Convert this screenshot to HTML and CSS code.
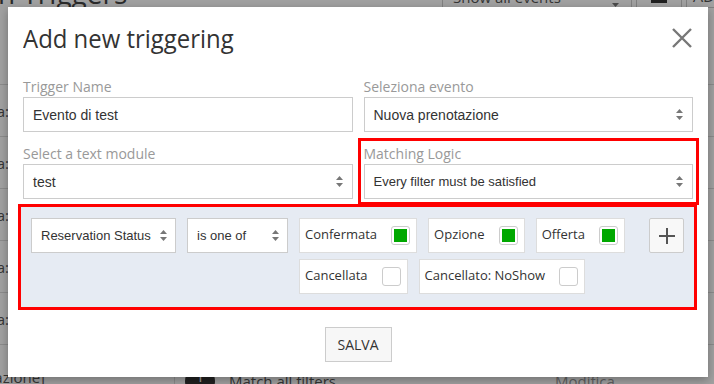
FILE: index.html
```html
<html lang="it">
<head>
<meta charset="UTF-8">
<meta name="viewport" content="width=device-width, initial-scale=1.0">
<title>Add new triggering</title>
<link rel="stylesheet" href="styles.css">
</head>
<body>
<div class="page">
  <div class="page-head">
    <h1 class="page-title">n Triggers</h1>
    <div class="page-tools">
      <div class="tool-select">Show all events
        <svg class="arrows" width="7" height="11" viewBox="0 0 7 11"><polygon points="0,4 3.5,0 7,4"/><polygon points="0,7 3.5,11 7,7"/></svg>
      </div>
      <div class="tool-btn"><span class="tool-icon"></span></div>
      <div class="tool-btn add">ADD</div>
    </div>
  </div>
  <div class="rows">
    <div class="row"><div class="row-key"><span>Data:</span></div></div>
    <div class="row"><div class="row-key"><span>Data:</span></div></div>
    <div class="row"><div class="row-key"><span>Data:</span></div></div>
    <div class="row"><div class="row-key"><span>Data:</span></div></div>
    <div class="row"><div class="row-key"><span>Data:</span></div></div>
    <div class="row last"><div class="row-key"><span>[Nuova prenotazione]</span></div>
      <div class="row-cell"><span class="badge">1</span>Match all filters</div>
      <div class="row-cell light">Modifica</div>
    </div>
  </div>
</div>

<div class="backdrop"></div>

<div class="modal">
  <div class="modal-header">
    <h2 class="modal-title">Add new triggering</h2>
    <svg class="close" width="22" height="20" viewBox="0 0 22 20"><path d="M2 1 L20 19 M20 1 L2 19" stroke="#777" stroke-width="2.4"/></svg>
  </div>
  <div class="modal-body">
    <div class="form-grid">
      <div class="form-group">
        <label>Trigger Name</label>
        <div class="field">Evento di test</div>
      </div>
      <div class="form-group">
        <label>Seleziona evento</label>
        <div class="field">Nuova prenotazione
          <svg class="arrows" width="7" height="11" viewBox="0 0 7 11"><polygon points="0,4 3.5,0 7,4"/><polygon points="0,7 3.5,11 7,7"/></svg>
        </div>
      </div>
      <div class="form-group">
        <label>Select a text module</label>
        <div class="field">test
          <svg class="arrows" width="7" height="11" viewBox="0 0 7 11"><polygon points="0,4 3.5,0 7,4"/><polygon points="0,7 3.5,11 7,7"/></svg>
        </div>
      </div>
      <div class="form-group matching">
        <label>Matching Logic</label>
        <div class="field small">Every filter must be satisfied
          <svg class="arrows" width="7" height="11" viewBox="0 0 7 11"><polygon points="0,4 3.5,0 7,4"/><polygon points="0,7 3.5,11 7,7"/></svg>
        </div>
      </div>
    </div>

    <div class="filter">
      <div class="filter-select wide">Reservation Status
        <svg class="arrows" width="7" height="11" viewBox="0 0 7 11"><polygon points="0,4 3.5,0 7,4"/><polygon points="0,7 3.5,11 7,7"/></svg>
      </div>
      <div class="filter-select">is one of
        <svg class="arrows" width="7" height="11" viewBox="0 0 7 11"><polygon points="0,4 3.5,0 7,4"/><polygon points="0,7 3.5,11 7,7"/></svg>
      </div>
      <div class="options">
        <div class="option"><span>Confermata</span><span class="check on"></span></div>
        <div class="option"><span>Opzione</span><span class="check on"></span></div>
        <div class="option"><span>Offerta</span><span class="check on"></span></div>
        <div class="option"><span>Cancellata</span><span class="check"></span></div>
        <div class="option"><span>Cancellato: NoShow</span><span class="check"></span></div>
      </div>
      <div class="add-btn">
        <svg width="18" height="18" viewBox="0 0 18 18"><path d="M9 1 V17 M1 9 H17" stroke="#555" stroke-width="2"/></svg>
      </div>
    </div>
  </div>
  <div class="modal-footer">
    <button class="save">SALVA</button>
  </div>
</div>
</body>
</html>
```

FILE: styles.css
```css
* {
  box-sizing: border-box;
}

body {
  margin: 0;
  width: 714px;
  height: 384px;
  overflow: hidden;
  position: relative;
  font-family: "Open Sans", sans-serif;
  background-color: #fff;
  color: #333;
}

/* page behind the dialog */
.page-head {
  display: flex;
  justify-content: space-between;
  margin-top: -22px;
  height: 30px;
}

.page-title {
  margin: 0 0 0 -2px;
  font-size: 28px;
  font-weight: 400;
  line-height: 30px;
  color: #444;
}

.page-tools {
  display: flex;
  align-items: stretch;
  margin-right: -12px;
}

.tool-select {
  width: 190px;
  display: flex;
  align-items: flex-end;
  justify-content: space-between;
  padding: 0 12px 0 10px;
  border: 1px solid #ccc;
  font-size: 15px;
  color: #555;
}

.tool-btn {
  width: 46px;
  margin-left: 4px;
  border: 1px solid #ccc;
  display: flex;
  justify-content: center;
  align-items: flex-end;
}

.tool-icon {
  width: 16px;
  height: 12px;
  background-color: #333;
  margin-bottom: 4px;
}

.tool-btn.add {
  width: 40px;
  font-size: 16px;
  color: #555;
  padding-left: 6px;
  justify-content: flex-start;
}

.rows {
  margin-top: 76px;
}

.row {
  height: 52px;
  display: flex;
  align-items: center;
  border-top: 1px solid #ddd;
}

.row-key {
  width: 9px;
  height: 100%;
  display: flex;
  align-items: center;
  justify-content: flex-end;
  overflow: hidden;
  white-space: nowrap;
  font-size: 15px;
  color: #555;
}

.row.last .row-key {
  width: 175px;
  padding: 12px 129px 0 0;
  border-right: 1px solid #ddd;
}

.row-cell {
  display: flex;
  align-items: center;
  gap: 14px;
  padding-left: 10px;
  width: 370px;
  margin-top: 20px;
  font-size: 15px;
  color: #555;
}

.row-cell.light {
  width: auto;
  color: #999;
}

.badge {
  width: 30px;
  height: 30px;
  border-radius: 50%;
  background-color: #333;
  color: #fff;
  text-align: center;
}

.backdrop {
  position: absolute;
  top: 0;
  left: 0;
  right: 0;
  bottom: 0;
  background-color: rgba(0, 0, 0, 0.37);
}

/* dialog */
.modal {
  position: absolute;
  top: 7px;
  left: 8px;
  width: 700px;
  background-color: #fff;
  box-shadow: 0 3px 9px rgba(0, 0, 0, 0.3);
}

.modal-header {
  display: flex;
  justify-content: space-between;
  align-items: flex-start;
  padding: 13px 15px 0;
}

.modal-title {
  margin: 0;
  font-size: 26px;
  font-weight: 400;
  line-height: 36px;
  color: #333;
  transform: scaleX(0.92);
  transform-origin: left center;
}

.close {
  margin-top: 8px;
}

.modal-body {
  padding: 21px 15px 0;
}

.form-grid {
  display: grid;
  grid-template-columns: 1fr 1fr;
  gap: 12px 11px;
}

.form-group label {
  display: block;
  font-size: 14px;
  line-height: 20px;
  color: #999;
}

.matching {
  outline: 3px solid #f00;
  outline-offset: 3px;
}

.field {
  height: 35px;
  display: flex;
  align-items: center;
  justify-content: space-between;
  padding: 0 9px 0 9px;
  border: 1px solid #ccc;
  font-family: "Liberation Sans", Arial, sans-serif;
  font-size: 14px;
  color: #333;
}

.field.small {
  font-size: 13px;
}

.arrows {
  fill: #777;
  flex-shrink: 0;
}

.filter {
  display: flex;
  align-items: flex-start;
  gap: 11px;
  margin: 5px -4px 0 -5px;
  padding: 11px 10px 13px 10px;
  border: 3px solid #f00;
  background-color: #e6ebf3;
}

.filter-select {
  width: 101px;
  height: 35px;
  display: flex;
  align-items: center;
  justify-content: space-between;
  padding: 0 8px 0 9px;
  background-color: #fff;
  border: 1px solid #ccc;
  font-family: "Liberation Sans", Arial, sans-serif;
  font-size: 13px;
  color: #333;
}

.filter-select.wide {
  width: 145px;
}

.options {
  flex: 1;
  display: flex;
  flex-wrap: wrap;
  gap: 6px 11px;
}

.option {
  height: 35px;
  display: flex;
  align-items: center;
  gap: 14px;
  padding: 0 6px 0 5px;
  background-color: #fff;
  border: 1px solid #ddd;
  font-size: 13px;
  color: #333;
}

.option span:first-child {
  margin-bottom: 4px;
}

.check {
  width: 19px;
  height: 19px;
  padding: 2px;
  border: 1px solid #ccc;
  border-radius: 3px;
  background-color: #fff;
}

.check.on::after {
  content: "";
  display: block;
  width: 100%;
  height: 100%;
  background-color: #00a800;
}

.add-btn {
  width: 35px;
  height: 35px;
  display: flex;
  justify-content: center;
  align-items: center;
  background-color: #f8f8f8;
  border: 1px solid #ccc;
  border-radius: 2px;
}

.modal-footer {
  padding: 17px 0 15px;
  text-align: center;
}

.save {
  width: 67px;
  height: 35px;
  background-color: #f7f7f7;
  border: 1px solid #ccc;
  border-radius: 0;
  font-family: "Open Sans", sans-serif;
  font-size: 14px;
  color: #333;
  padding: 0;
}
```
